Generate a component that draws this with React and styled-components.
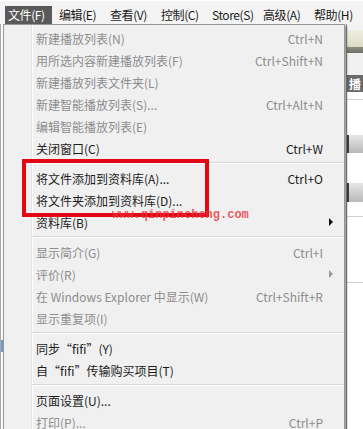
import React from 'react';
import styled, { createGlobalStyle } from 'styled-components';

const GlobalStyle = createGlobalStyle`
  html, body {
    margin: 0;
    padding: 0;
    background: #ffffff;
  }
  body {
    font-family: "Noto Sans CJK SC", "Liberation Sans", sans-serif;
    font-size: 12px;
  }
`;

const Page = styled.div`
  position: relative;
  width: 363px;
  height: 429px;
  overflow: hidden;
  display: flex;
  flex-direction: column;
  background: #ffffff;
`;

const MenuBar = styled.div`
  height: 24px;
  display: flex;
  align-items: flex-start;
  padding: 5px 0 0 5px;
  box-sizing: border-box;
  gap: 4px;
  background: #f4f4f4;
  border-top: 1px solid #ffffff;
`;

const BarItem = styled.div`
  width: 47px;
  flex: none;
  height: 18px;
  line-height: 18px;
  padding-left: 3px;
  box-sizing: border-box;
  white-space: nowrap;
  letter-spacing: -0.4px;
  color: ${(p) => (p.$open ? '#ffffff' : '#1a1a1a')};
  background: ${(p) => (p.$open ? '#595959' : 'transparent')};
`;

const Workspace = styled.div`
  flex: 1;
  display: flex;
`;

const LeftEdge = styled.div`
  width: 3px;
  display: flex;
  flex-direction: column;
  border-left: 1px solid #a9a9a9;
  box-sizing: border-box;
  background: #fbfbfb;
`;

const Accent = styled.div`
  margin-top: ${(p) => p.$top}px;
  height: ${(p) => p.$h}px;
  background: #6d9ccc;
`;

const Center = styled.div`
  flex: 1;
  background: #f0f0f0;
`;

const SidePanel = styled.div`
  width: 16px;
  display: flex;
  flex-direction: column;
  border-left: 1px solid #8c8c8c;
  background: #ffffff;
  overflow: hidden;
`;

const Band = styled.div`
  height: ${(p) => p.$h}px;
  flex: ${(p) => (p.$grow ? 1 : 'none')};
  background: ${(p) => p.$bg || '#ffffff'};
  border-bottom: ${(p) => (p.$line ? '1px solid #cfcfcf' : 'none')};
  box-sizing: border-box;
`;

const Label = styled.div`
  height: 17px;
  line-height: 17px;
  background: #6a6a6a;
  color: #ffffff;
  font-weight: bold;
  padding-left: 2px;
  white-space: nowrap;
  overflow: hidden;
`;

const GrayButton = styled.div`
  height: ${(p) => p.$h}px;
  background: linear-gradient(#e6e6e6, #b9b9b9);
  border-left: 2px solid #404040;
  box-sizing: border-box;
`;

const Menu = styled.div`
  position: absolute;
  left: 3px;
  top: 24px;
  width: 342px;
  height: 420px;
  box-sizing: border-box;
  padding: 2px 0 0 0;
  background: #f0f0f0;
  border: 1px solid #979797;
  box-shadow: 2px 2px 2px rgba(0, 0, 0, 0.35);
  display: flex;
  flex-direction: column;
  z-index: 2;
`;

const Gutter = styled.div`
  position: absolute;
  left: 27px;
  top: 0;
  bottom: 0;
  width: 1px;
  background: #e2e3e3;
  border-right: 1px solid #ffffff;
`;

const Row = styled.div`
  position: relative;
  height: 22px;
  display: flex;
  align-items: center;
  padding: 0 11px 0 32px;
  white-space: nowrap;
  color: ${(p) => (p.$disabled ? '#8d8d8d' : '#1c1c1c')};
`;

const ItemLabel = styled.span`
  flex: 1;
`;

const Shortcut = styled.span`
  margin-right: 10px;
`;

const Arrow = styled.span`
  width: 0;
  height: 0;
  border-left: 4px solid ${(p) => (p.$disabled ? '#9a9a9a' : '#111111')};
  border-top: 4px solid transparent;
  border-bottom: 4px solid transparent;
`;

const Separator = styled.div`
  position: relative;
  height: 8px;
  display: flex;
  align-items: center;
  padding-left: 28px;

  &::after {
    content: '';
    flex: 1;
    height: 1px;
    background: #d7d7d7;
    border-bottom: 1px solid #ffffff;
  }
`;

const Highlight = styled.div`
  position: absolute;
  left: 22px;
  top: 159px;
  width: 187px;
  height: 58px;
  box-sizing: border-box;
  border: 4px solid #e30613;
  z-index: 3;
`;

const Watermark = styled.div`
  position: absolute;
  left: 112px;
  top: 208px;
  font-family: "Liberation Mono", "DejaVu Sans Mono", monospace;
  font-size: 12px;
  font-weight: bold;
  color: rgba(232, 48, 60, 0.8);
  white-space: nowrap;
  z-index: 4;
`;

const barItems = ['文件(F)', '编辑(E)', '查看(V)', '控制(C)', 'Store(S)', '高级(A)', '帮助(H)'];

const menuGroups = [
  [
    { label: '新建播放列表(N)', shortcut: 'Ctrl+N', disabled: true },
    { label: '用所选内容新建播放列表(F)', shortcut: 'Ctrl+Shift+N', disabled: true },
    { label: '新建播放列表文件夹(L)', disabled: true },
    { label: '新建智能播放列表(S)...', shortcut: 'Ctrl+Alt+N', disabled: true },
    { label: '编辑智能播放列表(E)', disabled: true },
    { label: '关闭窗口(C)', shortcut: 'Ctrl+W' },
  ],
  [
    { label: '将文件添加到资料库(A)...', shortcut: 'Ctrl+O' },
    { label: '将文件夹添加到资料库(D)...' },
    { label: '资料库(B)', submenu: true },
  ],
  [
    { label: '显示简介(G)', shortcut: 'Ctrl+I', disabled: true },
    { label: '评价(R)', submenu: true, disabled: true },
    { label: '在 Windows Explorer 中显示(W)', shortcut: 'Ctrl+Shift+R', disabled: true },
    { label: '显示重复项(I)', disabled: true },
  ],
  [
    { label: '同步“fifi”(Y)' },
    { label: '自“fifi”传输购买项目(T)' },
  ],
  [
    { label: '页面设置(U)...' },
    { label: '打印(P)...', shortcut: 'Ctrl+P', disabled: true },
  ],
];

const MenuRow = ({ item }) => (
  <Row $disabled={item.disabled}>
    <ItemLabel>{item.label}</ItemLabel>
    {item.shortcut && <Shortcut>{item.shortcut}</Shortcut>}
    {item.submenu && <Arrow $disabled={item.disabled} />}
  </Row>
);

const App = () => {
  return (
    <>
      <GlobalStyle />
      <Page>
        <MenuBar>
          {barItems.map((name, i) => (
            <BarItem key={name} $open={i === 0}>
              {name}
            </BarItem>
          ))}
        </MenuBar>
        <Workspace>
          <LeftEdge>
            <Accent $top={316} $h={12} />
          </LeftEdge>
          <Center />
          <SidePanel>
            <Band $h={6} $bg="#f3f3f3" />
            <Band $h={17} $bg="linear-gradient(#efefe0, #dcdcc6)" />
            <Band $h={6} $bg="linear-gradient(#8e8e82, #6e6e66)" />
            <Band $h={22} $bg="#f0f0f0" />
            <Label>播</Label>
            <Band $h={8} $line />
            <Band $h={35} />
            <GrayButton $h={18} />
            <Band $h={30} />
            <GrayButton $h={19} />
            <Band $h={15} $line />
            <Band $h={66} $line />
            <Band $grow />
          </SidePanel>
        </Workspace>

        <Menu>
          <Gutter />
          {menuGroups.map((group, gi) => (
            <React.Fragment key={gi}>
              {gi > 0 && <Separator />}
              {group.map((item) => (
                <MenuRow key={item.label} item={item} />
              ))}
            </React.Fragment>
          ))}
        </Menu>

        <Highlight />
        <Watermark>www.qinpincheng.com</Watermark>
      </Page>
    </>
  );
};

export default App;
